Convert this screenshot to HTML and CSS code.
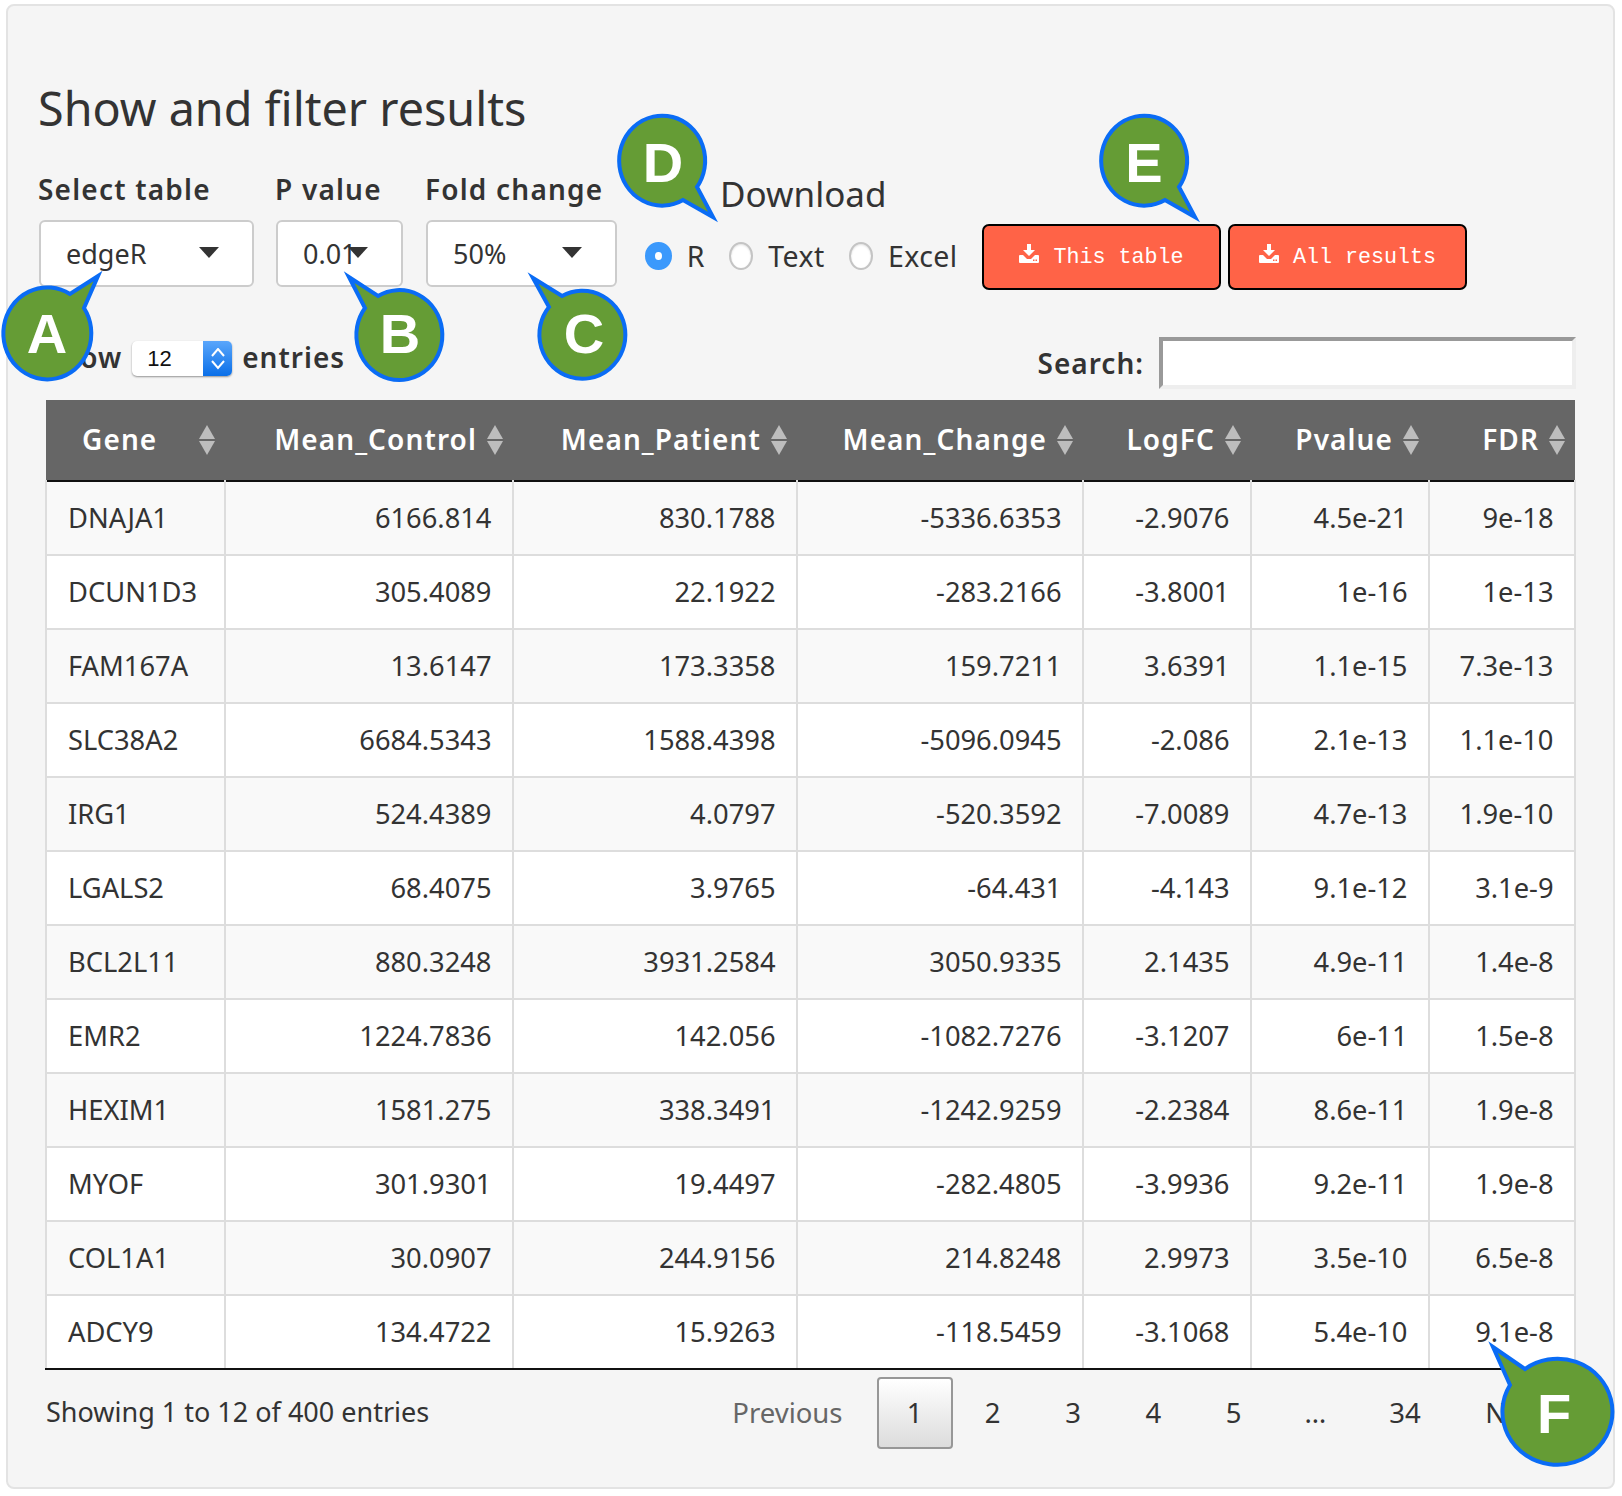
FILE: index.html
```html
<!DOCTYPE html>
<html lang="en">
  <head>
    <meta charset="UTF-8" />
    <title>Show and filter results</title>
    <link rel="stylesheet" href="styles.css">
  </head>
  <body>
    <div class="panel">
      <h2 class="title">Show and filter results</h2>
      <div class="controls">
        <div class="field field-table">
          <label>Select table</label>
          <div class="select">edgeR<span class="caret"></span></div>
        </div>
        <div class="field field-p">
          <label>P value</label>
          <div class="select">0.01<span class="caret"></span></div>
        </div>
        <div class="field field-fold">
          <label>Fold change</label>
          <div class="select">50%<span class="caret"></span></div>
        </div>
        <div class="download">
          <div class="download-title">Download</div>
          <div class="radios">
            <span class="radio checked"></span><span class="radio-text">R</span>
            <span class="radio"></span><span class="radio-text">Text</span>
            <span class="radio"></span><span class="radio-text">Excel</span>
          </div>
        </div>
        <div class="buttons">
          <a class="btn">
            <svg class="dl-icon" viewBox="0 0 20 19"><path d="M8 0h4v6h4l-6 6-6-6h4zM1 11h3l4 4h4l4-4h3q1 0 1 1v6q0 1-1 1H1q-1 0-1-1v-6q0-1 1-1z"/><path class="dots" d="M14 15.500h1.500v1.500H14zM16.500 15.500H18v1.500h-1.500z"/></svg>
            This table
          </a>
          <a class="btn">
            <svg class="dl-icon" viewBox="0 0 20 19"><path d="M8 0h4v6h4l-6 6-6-6h4zM1 11h3l4 4h4l4-4h3q1 0 1 1v6q0 1-1 1H1q-1 0-1-1v-6q0-1 1-1z"/><path class="dots" d="M14 15.500h1.500v1.500H14zM16.500 15.500H18v1.500h-1.500z"/></svg>
            All results
          </a>
        </div>
      </div>
      <div class="table-top">
        <div class="length">
          Show
          <span class="number">12<span class="spinner"><svg viewBox="0 0 14 22"><path d="M1 8l6-7 6 7M1 13l6 7 6-7"/></svg></span></span>
          entries
        </div>
        <div class="search">Search:<span class="search-input"></span></div>
      </div>
      <table class="results">
        <thead>
          <tr>
            <th class="gene">Gene<svg class="sort" viewBox="0 0 18 30"><path d="M9 0l8 14H1z"/><path d="M1 16h16L9 30z"/></svg></th>
            <th class="col-control">Mean_Control<svg class="sort" viewBox="0 0 18 30"><path d="M9 0l8 14H1z"/><path d="M1 16h16L9 30z"/></svg></th>
            <th class="col-patient">Mean_Patient<svg class="sort" viewBox="0 0 18 30"><path d="M9 0l8 14H1z"/><path d="M1 16h16L9 30z"/></svg></th>
            <th class="col-change">Mean_Change<svg class="sort" viewBox="0 0 18 30"><path d="M9 0l8 14H1z"/><path d="M1 16h16L9 30z"/></svg></th>
            <th class="col-log">LogFC<svg class="sort" viewBox="0 0 18 30"><path d="M9 0l8 14H1z"/><path d="M1 16h16L9 30z"/></svg></th>
            <th class="col-p">Pvalue<svg class="sort" viewBox="0 0 18 30"><path d="M9 0l8 14H1z"/><path d="M1 16h16L9 30z"/></svg></th>
            <th class="col-fdr">FDR<svg class="sort" viewBox="0 0 18 30"><path d="M9 0l8 14H1z"/><path d="M1 16h16L9 30z"/></svg></th>
          </tr>
        </thead>
        <tbody>
          <tr><td>DNAJA1</td><td>6166.814</td><td>830.1788</td><td>-5336.6353</td><td>-2.9076</td><td>4.5e-21</td><td>9e-18</td></tr>
          <tr><td>DCUN1D3</td><td>305.4089</td><td>22.1922</td><td>-283.2166</td><td>-3.8001</td><td>1e-16</td><td>1e-13</td></tr>
          <tr><td>FAM167A</td><td>13.6147</td><td>173.3358</td><td>159.7211</td><td>3.6391</td><td>1.1e-15</td><td>7.3e-13</td></tr>
          <tr><td>SLC38A2</td><td>6684.5343</td><td>1588.4398</td><td>-5096.0945</td><td>-2.086</td><td>2.1e-13</td><td>1.1e-10</td></tr>
          <tr><td>IRG1</td><td>524.4389</td><td>4.0797</td><td>-520.3592</td><td>-7.0089</td><td>4.7e-13</td><td>1.9e-10</td></tr>
          <tr><td>LGALS2</td><td>68.4075</td><td>3.9765</td><td>-64.431</td><td>-4.143</td><td>9.1e-12</td><td>3.1e-9</td></tr>
          <tr><td>BCL2L11</td><td>880.3248</td><td>3931.2584</td><td>3050.9335</td><td>2.1435</td><td>4.9e-11</td><td>1.4e-8</td></tr>
          <tr><td>EMR2</td><td>1224.7836</td><td>142.056</td><td>-1082.7276</td><td>-3.1207</td><td>6e-11</td><td>1.5e-8</td></tr>
          <tr><td>HEXIM1</td><td>1581.275</td><td>338.3491</td><td>-1242.9259</td><td>-2.2384</td><td>8.6e-11</td><td>1.9e-8</td></tr>
          <tr><td>MYOF</td><td>301.9301</td><td>19.4497</td><td>-282.4805</td><td>-3.9936</td><td>9.2e-11</td><td>1.9e-8</td></tr>
          <tr><td>COL1A1</td><td>30.0907</td><td>244.9156</td><td>214.8248</td><td>2.9973</td><td>3.5e-10</td><td>6.5e-8</td></tr>
          <tr><td>ADCY9</td><td>134.4722</td><td>15.9263</td><td>-118.5459</td><td>-3.1068</td><td>5.4e-10</td><td>9.1e-8</td></tr>
        </tbody>
      </table>
      <div class="table-bottom">
        <div class="info">Showing 1 to 12 of 400 entries</div>
        <div class="pager">
          <span class="page prev">Previous</span>
          <span class="page current">1</span>
          <span class="page">2</span>
          <span class="page">3</span>
          <span class="page">4</span>
          <span class="page">5</span>
          <span class="page ellipsis">…</span>
          <span class="page">34</span>
          <span class="page">Next</span>
        </div>
      </div>
    </div>

    <!-- callouts sit on top of the app -->
    <svg class="callouts" viewBox="0 0 1622 1496">
      <path d="M70 294A44 46 0 1 0 84 308L98 276Z"/>
      <text x="47" y="353">A</text>
      <path d="M378 296A43 45 0 1 1 365 308L349 277Z"/>
      <text x="400" y="353">B</text>
      <path d="M562 296A43 44 0 1 1 549 307L533 278Z"/>
      <text x="584" y="353">C</text>
      <path d="M697 187A43 45 0 1 0 683 200L713 217Z"/>
      <text x="663" y="182">D</text>
      <path d="M1179 187A43 45 0 1 0 1165 200L1195 217Z"/>
      <text x="1144" y="182">E</text>
      <path d="M1525 1369A55 53 0 1 1 1510 1385L1493 1347Z"/>
      <text x="1554" y="1433">F</text>
    </svg>
  </body>
</html>
```

FILE: styles.css
```css
/* styles.css */
body {
  margin: 0;
  width: 1622px;
  height: 1496px;
  background: #fff;
  font-family: "Noto Sans", sans-serif;
  color: #333;
  position: relative;
  overflow: hidden;
}

.panel {
  box-sizing: border-box;
  width: 1609px;
  height: 1485px;
  margin: 4px 0 0 6px;
  padding: 70px 37px 0 30px;
  background: #f5f5f5;
  border: 2px solid #e3e3e3;
  border-radius: 8px;
}

.title {
  margin: 0;
  font-size: 46.700px;
  line-height: 64px;
  font-weight: 400;
}

.controls {
  display: flex;
  height: 154px;
  margin-top: 30px;
}

.field label {
  display: block;
  font-size: 28px;
  line-height: 38px;
  font-weight: 600;
  letter-spacing: 1.200px;
  margin-bottom: 12px;
}

.field-table { width: 237px; }
.field-p { width: 150px; }
.field-fold { width: 192px; }

.select {
  box-sizing: border-box;
  position: relative;
  height: 67px;
  margin-left: 1px;
  padding: 0 25px;
  line-height: 63px;
  font-size: 27px;
  background: #fff;
  border: 2px solid #ccc;
  border-radius: 6px;
}

.field-table .select { width: 215px; }
.field-p .select { width: 127px; }
.field-fold .select { width: 191px; }

.caret {
  position: absolute;
  top: 25px;
  right: 33px;
  border-left: 10px solid transparent;
  border-right: 10px solid transparent;
  border-top: 11px solid #333;
}

.download {
  margin-left: 28px;
  width: 337px;
}

.download-title {
  margin: 2px 0 0 75px;
  font-size: 35px;
  line-height: 44px;
}

.radios {
  display: flex;
  align-items: center;
  margin-top: 21px;
  font-size: 28.500px;
  line-height: 38px;
}

.radio {
  box-sizing: border-box;
  width: 28px;
  height: 28px;
  border-radius: 50%;
  background: #fff;
  border: 2px solid #c4c4c4;
  box-shadow: inset 0 1px 2px rgba(0, 0, 0, 0.12);
}

.radio.checked {
  border: 10px solid #3b99fc;
  box-shadow: none;
}

.radio-text {
  margin: 0 24.500px 0 15px;
  letter-spacing: 0.400px;
}

.buttons {
  display: flex;
  gap: 7px;
  margin-top: 54px;
  height: 66px;
}

.btn {
  box-sizing: border-box;
  display: flex;
  align-items: center;
  justify-content: center;
  gap: 14px;
  width: 239px;
  height: 66px;
  background: #ff6347;
  border: 2px solid #000;
  border-radius: 7px;
  color: #fff;
  font-family: "Liberation Mono", monospace;
  font-size: 21.700px;
}

.dl-icon {
  width: 20px;
  height: 19px;
  margin-top: -8px;
  fill: #fff;
}

.dl-icon .dots { fill: #ff6347; }

.table-top {
  display: flex;
  justify-content: space-between;
  align-items: flex-start;
  height: 86px;
  margin-left: 7px;
  margin-top: -10px;
  font-size: 28px;
  font-weight: 600;
  letter-spacing: 1px;
}

.length {
  display: flex;
  align-items: center;
  gap: 10px;
  height: 34px;
  margin-top: 26px;
}

.number {
  box-sizing: border-box;
  position: relative;
  width: 100px;
  height: 35px;
  margin-top: 3px;
  padding-left: 15px;
  background: #fff;
  border-radius: 5px;
  box-shadow: 0 1px 2px rgba(0, 0, 0, 0.4);
  font-family: "Liberation Sans", sans-serif;
  font-weight: 400;
  font-size: 22px;
  line-height: 36px;
  letter-spacing: 0;
  color: #111;
}

.spinner {
  position: absolute;
  top: 0;
  right: 0;
  width: 29px;
  height: 35px;
  background: linear-gradient(#5aa6fb, #0a6fe8);
  border-radius: 0 5px 5px 0;
}

.spinner svg {
  display: block;
  width: 14px;
  height: 22px;
  margin: 6.500px 7.500px;
  fill: none;
  stroke: #fff;
  stroke-width: 2;
}

.search {
  display: flex;
  align-items: center;
  gap: 15px;
  margin-top: 23px;
}

.search-input {
  box-sizing: border-box;
  width: 417px;
  height: 52px;
  background: #fff;
  border-style: solid;
  border-width: 4px;
  border-color: #999 #eee #eee #999;
}

.results {
  width: 1529px;
  margin-left: 7px;
  border-collapse: collapse;
  table-layout: fixed;
  font-size: 27.300px;
}

.results thead tr {
  height: 81px;
  background: #666;
  border-bottom: 2px solid #111;
}

.results th {
  box-sizing: border-box;
  position: relative;
  padding: 0 36px 2px 0;
  text-align: right;
  color: #fff;
  font-size: 28px;
  font-weight: 600;
  letter-spacing: 1.100px;
}

.results th.gene {
  width: 179px;
  padding: 0 0 2px 36px;
  text-align: left;
}

.col-control { width: 288px; }
.col-patient { width: 284px; }
.col-change { width: 286px; }
.col-log { width: 168px; }
.col-p { width: 178px; }
.col-fdr { width: 146px; }

.sort {
  position: absolute;
  top: 25px;
  right: 9px;
  width: 18px;
  height: 30px;
  fill: #bdbdbd;
}

.results td {
  box-sizing: border-box;
  height: 74px;
  padding: 0 20.500px 2px 21px;
  text-align: right;
  border: 2px solid #ddd;
  border-top: 0;
}

.results td:first-child { text-align: left; }

.results tbody tr { background: #fff; }
.results tbody tr:nth-child(odd) { background: #f9f9f9; }
.results tbody tr:last-child td { border-bottom: 2px solid #111; }

.table-bottom {
  display: flex;
  justify-content: space-between;
  margin-left: 8px;
}

.info {
  margin-top: 23px;
  font-size: 27px;
  line-height: 38px;
}

.pager {
  display: flex;
  align-items: center;
  margin: 7px -2px 0 0;
  height: 72px;
  font-size: 27.500px;
}

.page {
  padding: 0 32.300px 2px;
}

.ellipsis {
  padding: 0 30.700px 2px;
}

.prev {
  padding: 0 0 2px;
  margin-right: 34px;
  color: #666;
}

.current {
  box-sizing: border-box;
  width: 76px;
  height: 72px;
  padding: 0;
  text-align: center;
  line-height: 68px;
  border: 2px solid #979797;
  border-radius: 4px;
  background: linear-gradient(#fff, #dcdcdc);
}

.callouts {
  position: absolute;
  left: 0;
  top: 0;
  width: 1622px;
  height: 1496px;
}

.callouts path {
  fill: #659c35;
  stroke: #0a6cf5;
  stroke-width: 4;
}

.callouts text {
  fill: #fff;
  font-family: "Liberation Sans", sans-serif;
  font-weight: 700;
  font-size: 56px;
  text-anchor: middle;
}
```
